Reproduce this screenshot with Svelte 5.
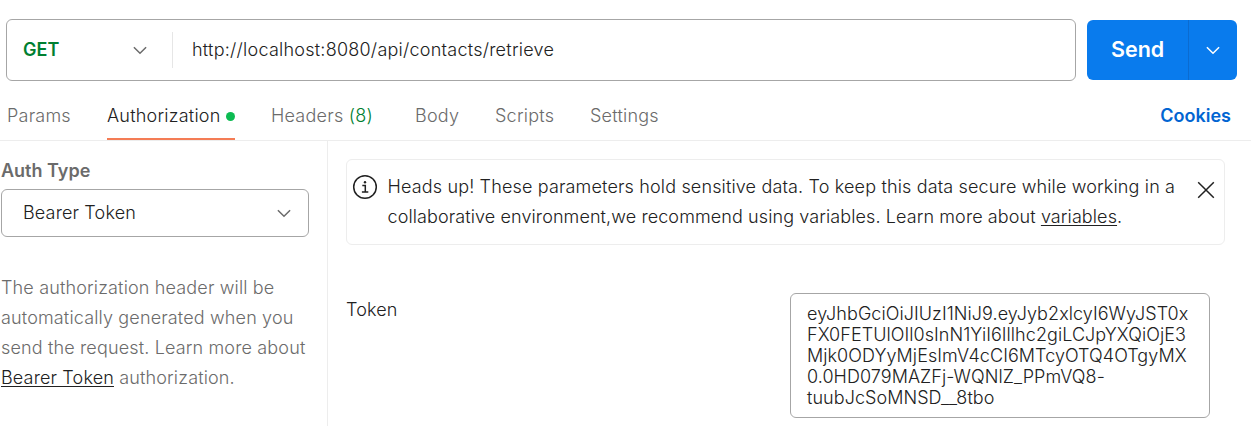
<script>
  const tabs = [
    { label: 'Params', width: 64 },
    { label: 'Authorization', width: 128, active: true },
    { label: 'Headers', count: 8, width: 102 },
    { label: 'Body', width: 44 },
    { label: 'Scripts', width: 59 },
    { label: 'Settings', width: 72 }
  ];
  const tokenLines = [
    'eyJhbGciOiJIUzI1NiJ9.eyJyb2xlcyI6WyJST0x',
    'FX0FETUlOIl0sInN1YiI6Illhc2giLCJpYXQiOjE3',
    'Mjk0ODYyMjEsImV4cCI6MTcyOTQ4OTgyMX',
    '0.0HD079MAZFj-WQNlZ_PPmVQ8-',
    'tuubJcSoMNSD__8tbo'
  ];
</script>

{#snippet chevron()}
  <svg class="chevron" width="14" height="9" viewBox="0 0 14 9" fill="none" stroke="currentColor" stroke-width="1.5">
    <path d="M.9 1.2 7 7.3l6.1-6.1" />
  </svg>
{/snippet}

<main>
  <div class="request">
    <div class="url-box">
      <div class="method"><span>GET</span>{@render chevron()}</div>
      <div class="url">http://localhost:8080/api/contacts/retrieve</div>
    </div>
    <div class="send">
      <div class="send-label">Send</div>
      <div class="send-more">{@render chevron()}</div>
    </div>
  </div>

  <nav>
    {#each tabs as tab}
      <div class="tab" class:active={tab.active} class:counted={tab.count} style="width: {tab.width}px">
        <span>{tab.label}</span>
        {#if tab.count}<span class="count">({tab.count})</span>{/if}
        {#if tab.active}<i class="dot"></i>{/if}
      </div>
    {/each}
    <div class="cookies">Cookies</div>
  </nav>

  <div class="content">
    <aside>
      <div class="auth-label">Auth Type</div>
      <div class="select"><span>Bearer Token</span>{@render chevron()}</div>
      <p class="help">The authorization header will be<br />automatically generated when you<br />send the request. Learn more about<br /><span class="link">Bearer Token</span> authorization.</p>
    </aside>
    <section>
      <div class="notice">
        <svg class="info" width="26" height="26" viewBox="0 0 26 26" fill="none" stroke="#212121" stroke-width="1.5">
          <circle cx="13" cy="13" r="11.3" />
          <path d="M10.3 11.5h3v6.6M9.9 18.1h6.4" />
          <circle cx="13" cy="8.3" r="1.2" fill="#212121" stroke="none" />
        </svg>
        <p>Heads up! These parameters hold sensitive data. To keep this data secure while working in a<br /><span class="second">collaborative environment,we recommend using variables. Learn more about <span class="link">variables</span>.</span></p>
        <svg class="close" width="18" height="18" viewBox="0 0 18 18" fill="none" stroke="#212121" stroke-width="1.5">
          <path d="m1.2 1.2 15.6 15.6M16.8 1.2 1.2 16.8" />
        </svg>
      </div>
      <div class="token-row">
        <span class="token-label">Token</span>
        <div class="token">
          {#each tokenLines as line}<div>{line}</div>{/each}
        </div>
      </div>
    </section>
  </div>
</main>

<style>
  :global(body) { background: #fff; overflow: hidden; }
  main {
    box-sizing: border-box;
    width: 1251px;
    height: 426px;
    padding-top: 19px;
    display: flex;
    flex-direction: column;
    overflow: hidden;
    font: 350 18px/30px Inter, sans-serif;
    letter-spacing: .15px;
    color: #212121;
    white-space: nowrap;
  }
  div, p { box-sizing: border-box; margin: 0; }
  svg { display: block; flex: none; }
  .request { display: flex; height: 62px; padding-left: 6px; gap: 11px; align-items: center; }
  .url-box { display: flex; align-items: center; width: 1070px; height: 62px; border: 1px solid #a6a6a6; border-radius: 6px; }
  .method { display: flex; align-items: center; justify-content: space-between; width: 166px; height: 36px; padding: 0 25px 0 16px; border-right: 1px solid #e6e6e6; color: #007f31; font-weight: 600; letter-spacing: 0; }
  .chevron { color: #6b6b6b; }
  .url { padding-left: 19px; letter-spacing: .24px; }
  .send { display: flex; width: 150px; height: 60px; border-radius: 6px; background: #097bed; color: #fff; letter-spacing: 0; }
  .send-label { width: 102px; padding-left: 24px; border-right: 1px solid #0b6bd0; font-size: 21.5px; font-weight: 600; line-height: 59px; }
  .send-more { flex: 1; display: flex; align-items: center; justify-content: center; }
  .send .chevron { color: #fff; }
  nav { display: flex; flex: none; box-sizing: border-box; height: 60px; padding: 0 20px 0 7px; gap: 0 36px; border-bottom: 1px solid #ededed; color: #6b6b6b; }
  .tab { display: flex; align-items: center; justify-content: space-between; height: 59px; padding-top: 13px; border-bottom: 2px solid transparent; letter-spacing: .22px; }
  .active { color: #212121; border-color: #f47c55; }
  .counted { margin-right: 6px; }
  .count { color: #007f31; }
  .dot { width: 9px; height: 9px; border-radius: 50%; background: #0cbb52; }
  .cookies { margin-left: auto; padding-top: 20px; color: #0265d2; font-weight: 600; letter-spacing: 0; }
  .content { display: flex; flex: 1; min-height: 0; }
  aside { width: 328px; padding: 15px 18px 0 1px; border-right: 1px solid #ededed; color: #6b6b6b; box-sizing: border-box; }
  .auth-label { font-weight: 600; letter-spacing: 0; }
  .select { display: flex; align-items: center; justify-content: space-between; height: 48px; margin-top: 3px; padding: 0 17px 0 21px; border: 1px solid #a6a6a6; border-radius: 6px; color: #212121; }
  .help { margin-top: 36px; }
  .link { color: #212121; text-decoration: underline; text-decoration-thickness: 1px; text-underline-offset: 2px; }
  section { flex: 1; padding: 18px 26px 0 18px; }
  .notice { display: flex; height: 86px; padding: 12px 9px 0 5px; border: 1px solid #ededed; border-radius: 6px; }
  .second { letter-spacing: .1px; }
  .info { margin: 2px 9.5px 0 0; }
  .close { margin: 9px 0 0 auto; }
  .token-row { display: flex; justify-content: space-between; margin-top: 48px; padding-right: 15px; }
  .token-label { padding-top: 2px; }
  .token { width: 420px; height: 125px; padding: 9px 16px; border: 1px solid #a6a6a6; border-radius: 6px; line-height: 21px; letter-spacing: .06px; }
</style>
